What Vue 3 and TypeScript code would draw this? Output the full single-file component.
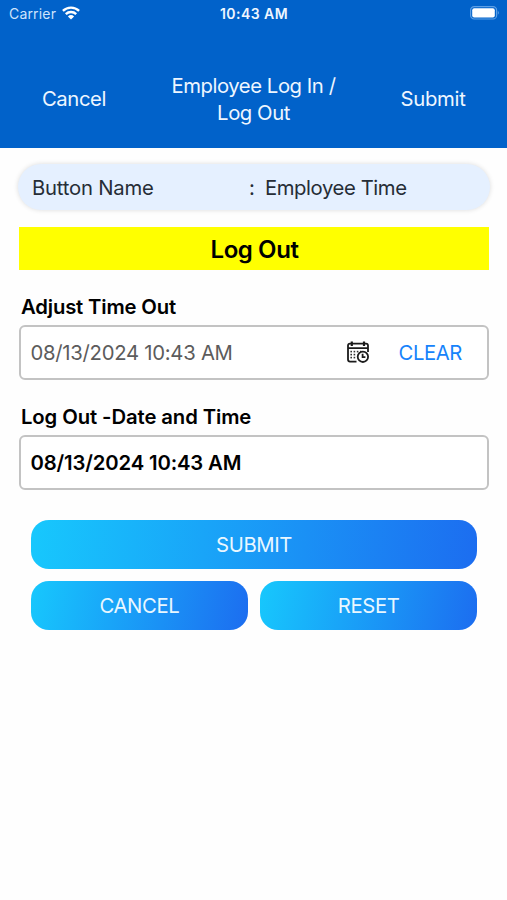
<script setup lang="ts">
import { ref } from 'vue'

const adjustTime = ref('08/13/2024 10:43 AM')
const logOutTime = ref('08/13/2024 10:43 AM')
const dots = [0, 1, 2, 3].flatMap((c) => [0, 1, 2].map((r) => ({ x: 4.2 + c * 3.2, y: 10.6 + r * 3 })))
  .filter((d) => !(d.x > 10 && d.y > 11))
</script>

<template>
  <main class="screen">
    <header class="header">
      <div class="status">
        <div class="carrier">
          <span class="carrier-name">Carrier</span>
          <svg class="wifi" viewBox="0 0 18 14" width="18" height="14">
            <path d="M0.9 4.9A11.7 11.7 0 0 1 17.1 4.9" />
            <path d="M3.8 8.1A7.5 7.5 0 0 1 14.2 8.1" />
            <path class="solid" d="M9 13.6L5.9 10.5A4.5 4.5 0 0 1 12.1 10.5Z" />
          </svg>
        </div>
        <span class="clock">10:43 AM</span>
        <svg class="battery" viewBox="0 0 30 14" width="30" height="14">
          <rect class="shell" x="0.6" y="0.6" width="26" height="12.4" rx="3.6" />
          <rect class="charge" x="2.2" y="2.2" width="22.6" height="9.2" rx="2" />
          <path class="tip" d="M27.8 4.8Q30 6.8 27.8 8.8Z" />
        </svg>
      </div>
      <nav class="nav">
        <button class="nav-btn">Cancel</button>
        <h1 class="title">Employee Log In /<br />Log Out</h1>
        <button class="nav-btn">Submit</button>
      </nav>
    </header>

    <section class="content">
      <div class="info">
        <span class="info-key">Button Name</span>
        <span>:</span>
        <span class="info-value">Employee Time</span>
      </div>
      <h2 class="banner">Log Out</h2>

      <div class="label">Adjust Time Out</div>
      <div class="field">
        <span class="value muted">{{ adjustTime }}</span>
        <svg class="calendar" viewBox="0 0 22 22" width="22" height="22">
          <path class="line" d="M9.5 20.6H3Q1 20.6 1 18.6V4.6Q1 2.6 3 2.6H19Q21 2.6 21 4.6V11M1 7.2H21" />
          <path class="pin" d="M4.8 0.4V5M17 0.4V5" />
          <rect v-for="(d, i) in dots" :key="i" :x="d.x - 0.8" :y="d.y - 0.8" width="1.6" height="1.6" />
          <circle class="dial" cx="15.9" cy="15.8" r="5.2" />
          <path class="hand" d="M15.6 12.8V16.2H18.4" />
        </svg>
        <button class="clear" @click="adjustTime = ''">CLEAR</button>
      </div>

      <div class="label second">Log Out -Date and Time</div>
      <div class="field">
        <span class="value strong">{{ logOutTime }}</span>
      </div>

      <div class="actions">
        <button class="action wide">SUBMIT</button>
        <button class="action">CANCEL</button>
        <button class="action">RESET</button>
      </div>
    </section>
  </main>
</template>

<style>
body {
  margin: 0;
  background: #fefefe;
}
</style>

<style scoped>
.screen {
  width: 507px;
  height: 900px;
  background: #fefefe;
  font-family: Inter, "Liberation Sans", sans-serif;
  font-size: 20.3px;
  color: #000;
}
button {
  border: 0;
  padding: 0;
  background: none;
  font: inherit;
  color: inherit;
}
.header {
  box-sizing: border-box;
  height: 147.5px;
  background: #0162ca;
  color: #eef6ff;
}
.status {
  display: grid;
  grid-template-columns: 1fr auto 1fr;
  align-items: center;
  height: 27px;
  padding: 0 7px 0 9px;
  font-size: 14px;
}
.carrier {
  display: flex;
  align-items: center;
  gap: 6px;
}
.carrier-name {
  color: #cfe4fc;
  letter-spacing: 0.17px;
}
.wifi {
  margin-top: -1px;
}
.wifi path {
  fill: none;
  stroke: #fff;
  stroke-width: 2.4;
}
.wifi .solid {
  fill: #fff;
  stroke: none;
}
.clock {
  font-weight: 600;
  letter-spacing: 0.45px;
  margin-right: 1px;
}
.battery {
  justify-self: end;
  margin-top: -1px;
}
.shell {
  fill: none;
  stroke: #5d9fe5;
  stroke-width: 1.2;
}
.charge {
  fill: #fff;
}
.tip {
  fill: #5d9fe5;
}
.nav {
  display: grid;
  grid-template-columns: 148px 1fr 148px;
  align-items: center;
  height: 54px;
  padding-top: 45px;
}
.nav-btn {
  height: 54px;
  padding-bottom: 2px;
  letter-spacing: -0.4px;
}
.nav-btn:last-child {
  letter-spacing: -0.3px;
}
.title {
  margin: 0;
  font-size: 20.3px;
  font-weight: 400;
  line-height: 27px;
  letter-spacing: -0.45px;
  text-align: center;
}
.content {
  padding: 16.5px 18px 0 19px;
}
.info {
  display: grid;
  grid-template-columns: 217px 16px 1fr;
  align-items: center;
  box-sizing: border-box;
  height: 46px;
  margin: 0 -1px;
  padding: 0 0 0 14px;
  border-radius: 23px;
  background: #e5f0ff;
  box-shadow: 0 0 5px rgba(0, 0, 0, 0.14);
  color: #262d36;
}
.info-key {
  letter-spacing: -0.22px;
}
.info-value {
  letter-spacing: -0.42px;
}
.banner {
  margin: 17px 0 0;
  height: 42.5px;
  line-height: 45px;
  background: #ff0;
  font-size: 24px;
  font-weight: 600;
  letter-spacing: -0.4px;
  text-align: center;
  text-indent: 1px;
}
.label {
  height: 24px;
  margin-top: 25px;
  padding-left: 2px;
  line-height: 24px;
  font-weight: 600;
  letter-spacing: -0.17px;
}
.second {
  letter-spacing: -0.1px;
}
.field {
  box-sizing: border-box;
  display: flex;
  align-items: center;
  height: 55px;
  margin-top: 6px;
  padding: 1px 25px 0 9.5px;
  border: 2px solid #c3c3c3;
  border-radius: 6px;
  background: #fff;
}
.value {
  flex: 1;
}
.muted {
  color: #5c5c5c;
  letter-spacing: -0.27px;
}
.strong {
  font-weight: 600;
  letter-spacing: -0.15px;
}
.calendar {
  margin: -1px 29px 0 0;
}
.calendar .line,
.calendar .pin,
.dial,
.hand {
  fill: none;
  stroke: #1b1b1b;
  stroke-width: 1.8;
}
.calendar .pin {
  stroke-width: 2.2;
}
.calendar .dial {
  fill: #fff;
}
.calendar rect {
  fill: #333;
}
.clear {
  color: #1683fb;
  letter-spacing: -0.4px;
}
.actions {
  display: grid;
  grid-template-columns: 1fr 1fr;
  gap: 12.5px;
  margin: 30px 12px 0;
}
.action {
  height: 49px;
  padding-top: 0;
  border-radius: 18px;
  background: linear-gradient(102deg, #17c8fd, #1c6df0);
  color: #e9f7ff;
  letter-spacing: -0.4px;
}
.wide {
  grid-column: span 2;
  background: linear-gradient(96deg, #17c8fd, #1c6df0);
}
</style>
